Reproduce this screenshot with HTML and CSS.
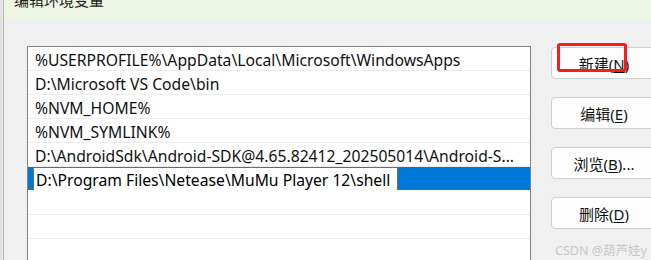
FILE: index.html
```html
<!DOCTYPE html>
<html lang="zh-CN">
  <head>
    <meta charset="UTF-8" />
    <meta name="viewport" content="width=device-width, initial-scale=1.0" />
    <title>编辑环境变量</title>
    <link rel="stylesheet" href="styles.css">
  </head>
  <body>
    <div class="edge"></div>
    <div class="dialog">
      <div class="titlebar">
        <span>编辑环境变量</span>
      </div>
      <div class="content">
        <div class="list">
          <div class="row">%USERPROFILE%\AppData\Local\Microsoft\WindowsApps</div>
          <div class="row">D:\Microsoft VS Code\bin</div>
          <div class="row">%NVM_HOME%</div>
          <div class="row">%NVM_SYMLINK%</div>
          <div class="row">D:\AndroidSdk\Android-SDK@4.65.82412_202505014\Android-S...</div>
          <div class="row selected">
            <div class="edit">D:\Program Files\Netease\MuMu Player 12\shell</div>
          </div>
          <div class="row"></div>
          <div class="row"></div>
          <div class="row"></div>
        </div>
        <div class="buttons">
          <button class="btn">新建(<u>N</u>)</button>
          <button class="btn">编辑(<u>E</u>)</button>
          <button class="btn">浏览(<u>B</u>)...</button>
          <button class="btn">删除(<u>D</u>)</button>
        </div>
      </div>
      <div class="mark"></div>
      <div class="watermark">CSDN @葫芦娃y</div>
    </div>
  </body>
</html>
```

FILE: styles.css
```css
* {
  padding: 0;
  margin: 0;
  box-sizing: border-box;
}
body {
  width: 651px;
  height: 260px;
  overflow: hidden;
  display: flex;
  background: #f0f0f0;
  font-family: "Noto Sans", "Noto Sans CJK SC", sans-serif;
  color: #111;
}
.edge {
  width: 4px;
  flex-shrink: 0;
  background: #e4e4e4;
  border-right: 1px solid #b8b8b8;
}
.dialog {
  flex: 1;
  position: relative;
  height: 260px;
  overflow: hidden;
}
.titlebar {
  height: 20px;
  background: #edf7e3;
  padding-left: 10px;
  overflow: hidden;
  font-size: 15px;
  line-height: 20px;
  color: #222;
}
.titlebar span {
  display: block;
  margin-top: -10px;
}
.content {
  display: flex;
  padding-left: 23px;
  padding-top: 26px;
}
.list {
  width: 504px;
  height: 230px;
  background: #fff;
  border: 1px solid #838383;
  flex-shrink: 0;
}
.row {
  height: 24px;
  border-bottom: 1px solid #ececec;
  padding-left: 7px;
  padding-top: 3px;
  font-size: 15.7px;
  line-height: 21px;
  white-space: nowrap;
  overflow: hidden;
}
.row.selected {
  background: #0078d7;
  border-bottom: 1px solid #fff;
  padding-left: 5px;
  padding-top: 0;
}
.edit {
  width: 365px;
  height: 25px;
  background: #fff;
  border: 1px solid #6a6a6a;
  padding-left: 2px;
  padding-top: 2px;
  line-height: 21px;
  color: #000;
}
.buttons {
  display: flex;
  flex-direction: column;
  gap: 18px;
  margin-left: 20px;
  padding-top: 1px;
}
.btn {
  width: 106px;
  height: 32px;
  background: #fdfdfd;
  border: 1px solid #d0d0d0;
  border-radius: 4px;
  font-family: "Noto Sans", "Noto Sans CJK SC", sans-serif;
  font-size: 15px;
  color: #111;
}
.btn u {
  text-underline-offset: 2px;
}
.mark {
  position: absolute;
  left: 553px;
  top: 43px;
  width: 70px;
  height: 29px;
  border: 3px solid #f81c1c;
  border-radius: 3px;
}
.watermark {
  position: absolute;
  left: 551px;
  top: 240px;
  font-size: 12.5px;
  color: #c8c8c8;
  white-space: nowrap;
}
```
